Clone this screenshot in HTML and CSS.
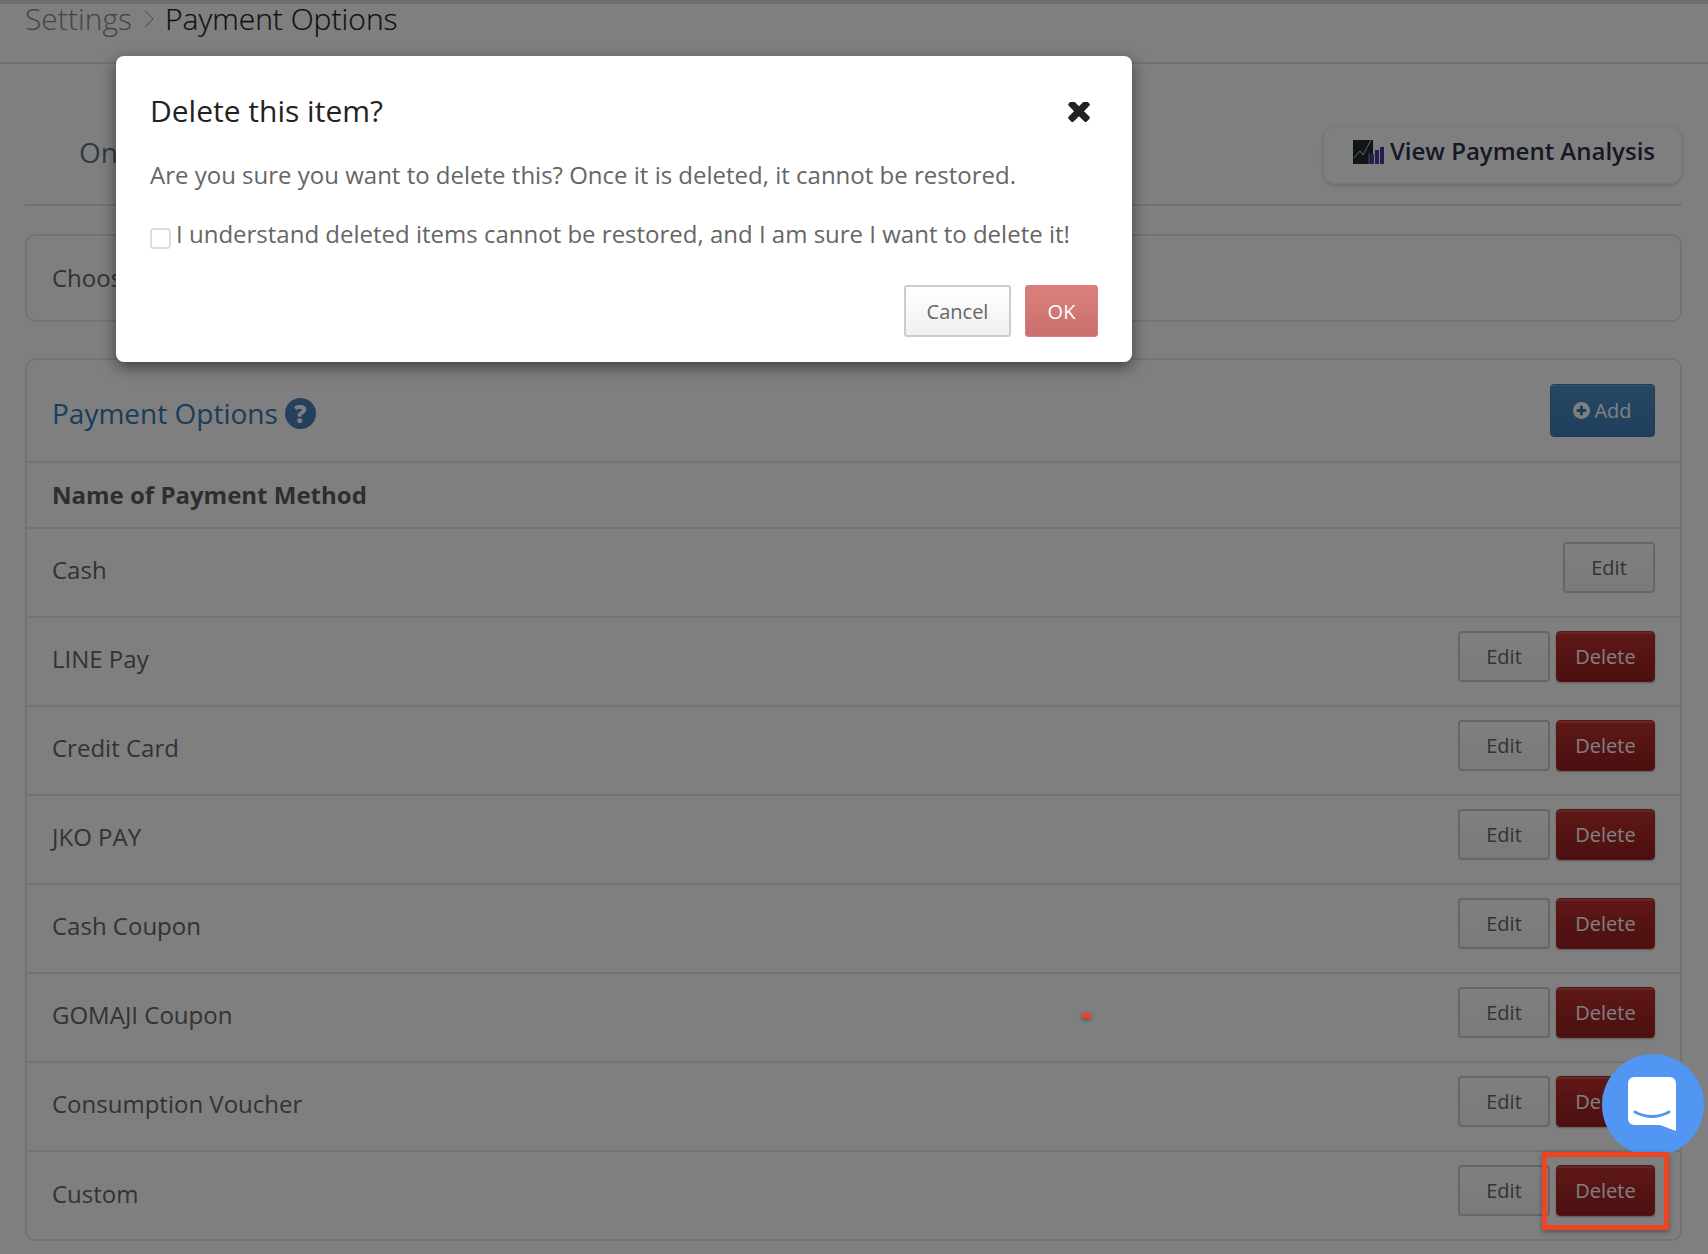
FILE: index.html
```html
<!DOCTYPE html>
<html lang="en">
<head>
<meta charset="utf-8">
<title>Payment Options</title>
<link rel="stylesheet" href="styles.css">
</head>
<body>
<div class="page">
  <div class="topstrip"></div>
  <header class="crumbs">
    <span class="crumb-muted">Settings</span>
    <svg class="crumb-sep" viewBox="0 0 10 18" width="10" height="18"><path d="M1 1l8 8-8 8" fill="none" stroke="#999" stroke-width="1"/></svg>
    <span class="crumb-current">Payment Options</span>
  </header>
  <main class="content">
    <div class="tabs">
      <span class="tab">Online</span>
      <a class="analysis">
        <svg class="analysis-icon" viewBox="0 0 31 24" width="31" height="24">
          <path d="M0 0h20v24H0z" fill="#3a4a55"/>
          <path d="M15 0h5v16h-5zM0 0h15v24H0z" fill="#1f2a30"/>
          <path d="M1 18l6-7 3 4 8-15" fill="none" stroke="#c8c8c8" stroke-width="1"/>
          <path d="M16 14h5v10h-5zM22 10h4v14h-4zM27 7h4v17h-4z" fill="#4a3f9f"/>
          <path d="M15.500 13h1v11h-1z" fill="#808080"/>
        </svg>
        View Payment Analysis
      </a>
    </div>
    <section class="choose">Choose</section>
    <section class="card">
      <div class="card-head">
        <h2 class="card-title">Payment Options <span class="help">?</span></h2>
        <button class="btn btn-add">
          <svg viewBox="0 0 18 18" width="17" height="17"><circle cx="9" cy="9" r="9" fill="#fff"/><path d="M9 4v10M4 9h10" stroke="#337ab7" stroke-width="3"/></svg>
          Add
        </button>
      </div>
      <div class="col-head">Name of Payment Method</div>
      <div class="row"><span>Cash</span><div class="actions"><button class="btn btn-edit">Edit</button></div></div>
      <div class="row"><span>LINE Pay</span><div class="actions"><button class="btn btn-edit">Edit</button><button class="btn btn-del">Delete</button></div></div>
      <div class="row"><span>Credit Card</span><div class="actions"><button class="btn btn-edit">Edit</button><button class="btn btn-del">Delete</button></div></div>
      <div class="row"><span>JKO PAY</span><div class="actions"><button class="btn btn-edit">Edit</button><button class="btn btn-del">Delete</button></div></div>
      <div class="row"><span>Cash Coupon</span><div class="actions"><button class="btn btn-edit">Edit</button><button class="btn btn-del">Delete</button></div></div>
      <div class="row"><span>GOMAJI Coupon</span><div class="actions"><button class="btn btn-edit">Edit</button><button class="btn btn-del">Delete</button></div></div>
      <div class="row"><span>Consumption Voucher</span><div class="actions"><button class="btn btn-edit">Edit</button><button class="btn btn-del">Delete</button></div></div>
      <div class="row row-last"><span>Custom</span><div class="actions"><button class="btn btn-edit">Edit</button><button class="btn btn-del">Delete</button></div></div>
    </section>
  </main>
</div>

<div class="backdrop"></div>

<div class="modal">
  <div class="modal-head">
    <h3 class="modal-title">Delete this item?</h3>
    <svg class="modal-close" viewBox="110 346 1188 1100" width="22" height="20"><path fill="#222" d="M1298 1214q0 40-28 68l-136 136q-28 28-68 28t-68-28l-294-294-294 294q-28 28-68 28t-68-28l-136-136q-28-28-28-68t28-68l294-294-294-294q-28-28-28-68t28-68l136-136q28-28 68-28t68 28l294 294 294-294q28-28 68-28t68 28l136 136q28 28 28 68t-28 68l-294 294 294 294q28 28 28 68z"/></svg>
  </div>
  <p class="modal-text">Are you sure you want to delete this? Once it is deleted, it cannot be restored.</p>
  <label class="modal-check"><input type="checkbox" class="check">I understand deleted items cannot be restored, and I am sure I want to delete it!</label>
  <div class="modal-actions">
    <button class="mbtn mbtn-cancel">Cancel</button>
    <button class="mbtn mbtn-ok">OK</button>
  </div>
</div>

<div class="mark-dash"></div>
<div class="chat">
  <svg class="chat-icon" viewBox="0 0 48 54" width="48" height="54">
    <path d="M6 0h36a6 6 0 0 1 6 6v48l-16-6H6a6 6 0 0 1-6-6V6a6 6 0 0 1 6-6z" fill="#fff"/>
    <path d="M7 35q17 9 34 0" fill="none" stroke="#5196f3" stroke-width="3" stroke-linecap="round"/>
  </svg>
</div>
<div class="mark-box"></div>
</body>
</html>
```
FILE: styles.css
```css
* { box-sizing: border-box; }
html, body { margin: 0; height: 100%; }
body {
  width: 1708px;
  height: 1254px;
  overflow: hidden;
  background: #fff;
  font-family: "Open Sans", "Noto Sans", "Liberation Sans", sans-serif;
  color: #666;
  position: relative;
}
.page { display: flex; flex-direction: column; height: 1254px; overflow: hidden; }
.topstrip { height: 4px; background: #ddd; flex: none; }
.crumbs {
  flex: none;
  height: 60px;
  padding: 0 25px 29px;
  display: flex;
  align-items: center;
  gap: 12px;
  font-size: 30px;
  line-height: 30px;
  font-weight: 300;
  border-bottom: 2px solid #e4e4e4;
}
.crumb-muted { color: #888; }
.crumb-current { color: #222; font-weight: 300; margin-left: -1px; -webkit-text-stroke: .2px #222; }
.crumb-sep { flex: none; }

.content { flex: none; padding: 0 26px 0 25px; }
.tabs {
  height: 142px;
  display: flex;
  justify-content: space-between;
  align-items: flex-start;
  padding-top: 62px;
  border-bottom: 2px solid #e4e4e4;
}
.tab { color: #5f7491; font-size: 28px; margin: 2px 0 0 54px; line-height: 48px; }
.analysis {
  width: 359px;
  height: 58px;
  border-radius: 12px;
  border: 1px solid #f0f0f0;
  box-shadow: 0 2px 4px rgba(0, 0, 0, .15);
  background: #fff;
  color: #2c3050;
  font-size: 24px;
  font-weight: 600;
  display: flex;
  align-items: flex-start;
  justify-content: flex-end;
  gap: 6px;
  padding: 5px 26px 0 0;
  line-height: 38px;
}
.analysis-icon { margin-top: 8px; }
.choose {
  margin-top: 28px;
  height: 88px;
  border: 2px solid #e6e6e6;
  border-radius: 10px;
  padding: 0 25px 2px;
  font-size: 24px;
  display: flex;
  align-items: center;
}
.card {
  margin-top: 36px;
  border: 2px solid #e6e6e6;
  border-radius: 10px;
}
.card-head {
  height: 103px;
  border-bottom: 2px solid #e6e6e6;
  padding: 24px 25px 0 25px;
  display: flex;
  justify-content: space-between;
  align-items: flex-start;
}
.card-title {
  margin: 0;
  font-size: 28px;
  font-weight: 400;
  line-height: 58px;
  color: #337ab7;
  display: flex;
  align-items: center;
  gap: 7px;
}
.help {
  width: 31px;
  height: 31px;
  border-radius: 50%;
  background: #4a7ebb;
  color: #fff;
  font-size: 24px;
  font-weight: 800;
  line-height: 31px;
  text-align: center;
}
.btn {
  font-family: inherit;
  font-size: 20px;
  border-radius: 4px;
  height: 51px;
  padding: 0;
  display: inline-flex;
  align-items: center;
  justify-content: center;
}
.btn-add {
  width: 105px;
  height: 53px;
  gap: 4px;
  color: #fff;
  background: linear-gradient(#4d8fc9, #3f80b8);
  border: 1px solid #3a78ad;
  box-shadow: inset 0 1px 0 rgba(255, 255, 255, .2);
}
.col-head {
  height: 66px;
  padding: 0 25px 2px;
  font-size: 24px;
  font-weight: 700;
  color: #5c5c5c;
  display: flex;
  align-items: center;
  border-bottom: 2px solid #e6e6e6;
}
.row {
  height: 89px;
  padding: 0 25px 6px;
  font-size: 24px;
  color: #666;
  display: flex;
  justify-content: space-between;
  align-items: center;
  border-bottom: 2px solid #e6e6e6;
}
.row-last { border-bottom: 0; height: 87px; padding-bottom: 4px; }
.actions { display: flex; gap: 6px; align-self: flex-start; padding-top: 13px; }
.btn-edit {
  width: 92px;
  color: #666;
  background: linear-gradient(#fff, #f5f5f5);
  border: 2px solid #ccc;
}
.btn-del {
  width: 99px;
  color: #fff;
  background: linear-gradient(#c03030, #981e1e);
  border: 1px solid #ac2826;
  box-shadow: inset 0 2px 0 rgba(255, 255, 255, .15), 0 1px 2px rgba(0, 0, 0, .3);
}

.backdrop { position: absolute; inset: 0; background: rgba(0, 0, 0, .5); }

.modal {
  position: absolute;
  left: 116px;
  top: 56px;
  width: 1016px;
  height: 306px;
  background: #fff;
  border-radius: 8px;
  box-shadow: 0 5px 15px rgba(0, 0, 0, .5);
  padding: 31px 34px 0 34px;
  color: #666;
}
.modal-head { display: flex; justify-content: space-between; align-items: center; height: 46px; padding-right: 8px; }
.modal-close { margin-top: 4px; }
.modal-title { margin: 0; font-size: 30px; font-weight: 400; color: #222; }
.modal-text { margin: 22px 0 0; font-size: 24px; line-height: 40px; white-space: nowrap; }
.modal-check { display: flex; align-items: center; margin-top: 19px; font-size: 24px; line-height: 40px; white-space: nowrap; }
.check {
  appearance: none;
  -webkit-appearance: none;
  flex: none;
  margin: 9px 5px 0 0;
  width: 21px;
  height: 21px;
  border: 2px solid #ddd;
  border-radius: 4px;
  background: #fff;
}
.modal-actions { display: flex; justify-content: flex-end; gap: 14px; margin-top: 31px; }
.mbtn { font-family: inherit; font-size: 20px; height: 52px; border-radius: 3px; padding: 0; }
.mbtn-cancel { width: 107px; color: #666; background: linear-gradient(#fff, #f0f0f0); border: 2px solid #ccc; }
.mbtn-ok { width: 73px; color: #fff; background: linear-gradient(#da807c, #c96f6d); border: 1px solid #d97b78; }

.mark-dash {
  position: absolute;
  left: 1082px;
  top: 1013px;
  width: 9px;
  height: 5px;
  background: #ee4424;
  box-shadow: 0 2px 4px rgba(0, 0, 0, .35);
}
.chat {
  position: absolute;
  left: 1602px;
  top: 1054px;
  width: 102px;
  height: 102px;
  border-radius: 50%;
  background: #5196f3;
  display: flex;
  align-items: center;
  justify-content: center;
}
.chat-icon { margin: 0 2px 2px 0; }
.mark-box {
  position: absolute;
  left: 1542px;
  top: 1152px;
  width: 127px;
  height: 78px;
  border: 5px solid #ee4424;
  box-shadow: 0 2px 5px rgba(0, 0, 0, .35);
}
```
